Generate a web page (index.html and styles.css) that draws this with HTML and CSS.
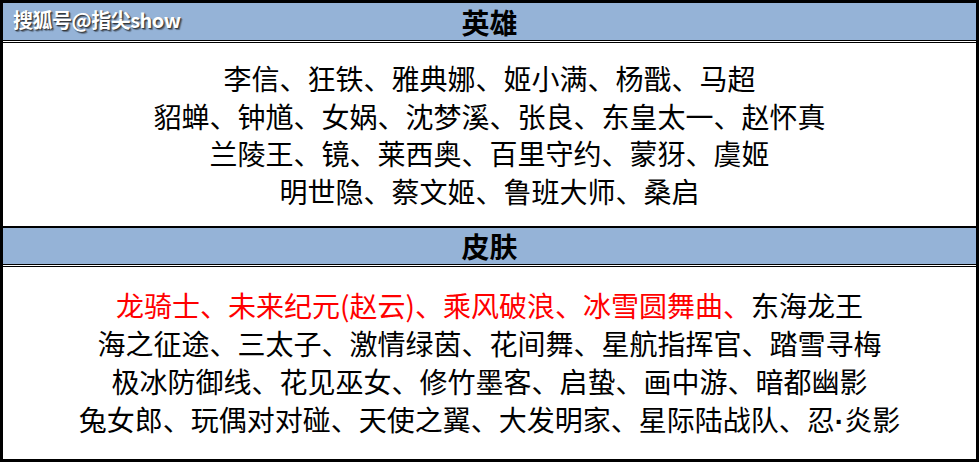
FILE: index.html
```html
<!DOCTYPE html>
<html lang="zh-CN">
<head>
<meta charset="utf-8">
<title>英雄 皮肤</title>
<link rel="stylesheet" href="styles.css">
</head>
<body>
<div class="sheet">
  <div class="watermark">搜狐号@指尖show</div>
  <div class="head head-first">英雄</div>
  <div class="cell cell-heroes">
    <div class="line">李信、狂铁、雅典娜、姬小满、杨戬、马超</div>
    <div class="line">貂蝉、钟馗、女娲、沈梦溪、张良、东皇太一、赵怀真</div>
    <div class="line">兰陵王、镜、莱西奥、百里守约、蒙犽、虞姬</div>
    <div class="line">明世隐、蔡文姬、鲁班大师、桑启</div>
  </div>
  <div class="head head-second">皮肤</div>
  <div class="cell cell-skins">
    <div class="line"><span class="red">龙骑士、未来纪元(赵云)、乘风破浪、冰雪圆舞曲、</span>东海龙王</div>
    <div class="line">海之征途、三太子、激情绿茵、花间舞、星航指挥官、踏雪寻梅</div>
    <div class="line">极冰防御线、花见巫女、修竹墨客、启蛰、画中游、暗都幽影</div>
    <div class="line">兔女郎、玩偶对对碰、天使之翼、大发明家、星际陆战队、忍<span class="dot">·</span>炎影</div>
  </div>
</div>
</body>
</html>
```

FILE: styles.css
```css
html, body {
  margin: 0;
  padding: 0;
  background: #ffffff;
}

body {
  width: 980px;
  height: 464px;
  overflow: hidden;
  font-family: "Noto Sans CJK SC", "Noto Sans", sans-serif;
  color: #000;
}

.sheet {
  position: relative;
  box-sizing: border-box;
  width: 979px;
  height: 462px;
  border: 3px solid #000;
  display: flex;
  flex-direction: column;
  background: #fff;
}

.head {
  background: #95b3d7;
  background-clip: padding-box;
  border-bottom: 3px double #000;
  font-weight: 700;
  font-size: 28px;
  display: flex;
  align-items: center;
  justify-content: center;
  line-height: 1;
}

.head-first {
  height: 37px;
}

.head-second {
  height: 36px;
}

.cell {
  display: flex;
  flex-direction: column;
  align-items: center;
  justify-content: center;
  font-size: 28px;
}

.cell-heroes {
  box-sizing: border-box;
  height: 185px;
  padding-top: 1px;
  border-bottom: 2px solid #000;
  line-height: 37.5px;
}

.cell-skins {
  flex: 1;
  line-height: 38px;
}

.line {
  white-space: nowrap;
}

.red {
  color: #ff0000;
}

.dot {
  font-family: "Liberation Sans", sans-serif;
  font-weight: 700;
}

.watermark {
  position: absolute;
  left: 10px;
  top: 3px;
  font-family: "Noto Sans CJK SC", sans-serif;
  font-weight: 700;
  font-size: 20px;
  line-height: 28px;
  color: #ffffff;
  text-shadow: 1px 1px 1px #333, 2px 2px 1px rgba(0, 0, 0, 0.35);
  letter-spacing: -0.5px;
}
```
